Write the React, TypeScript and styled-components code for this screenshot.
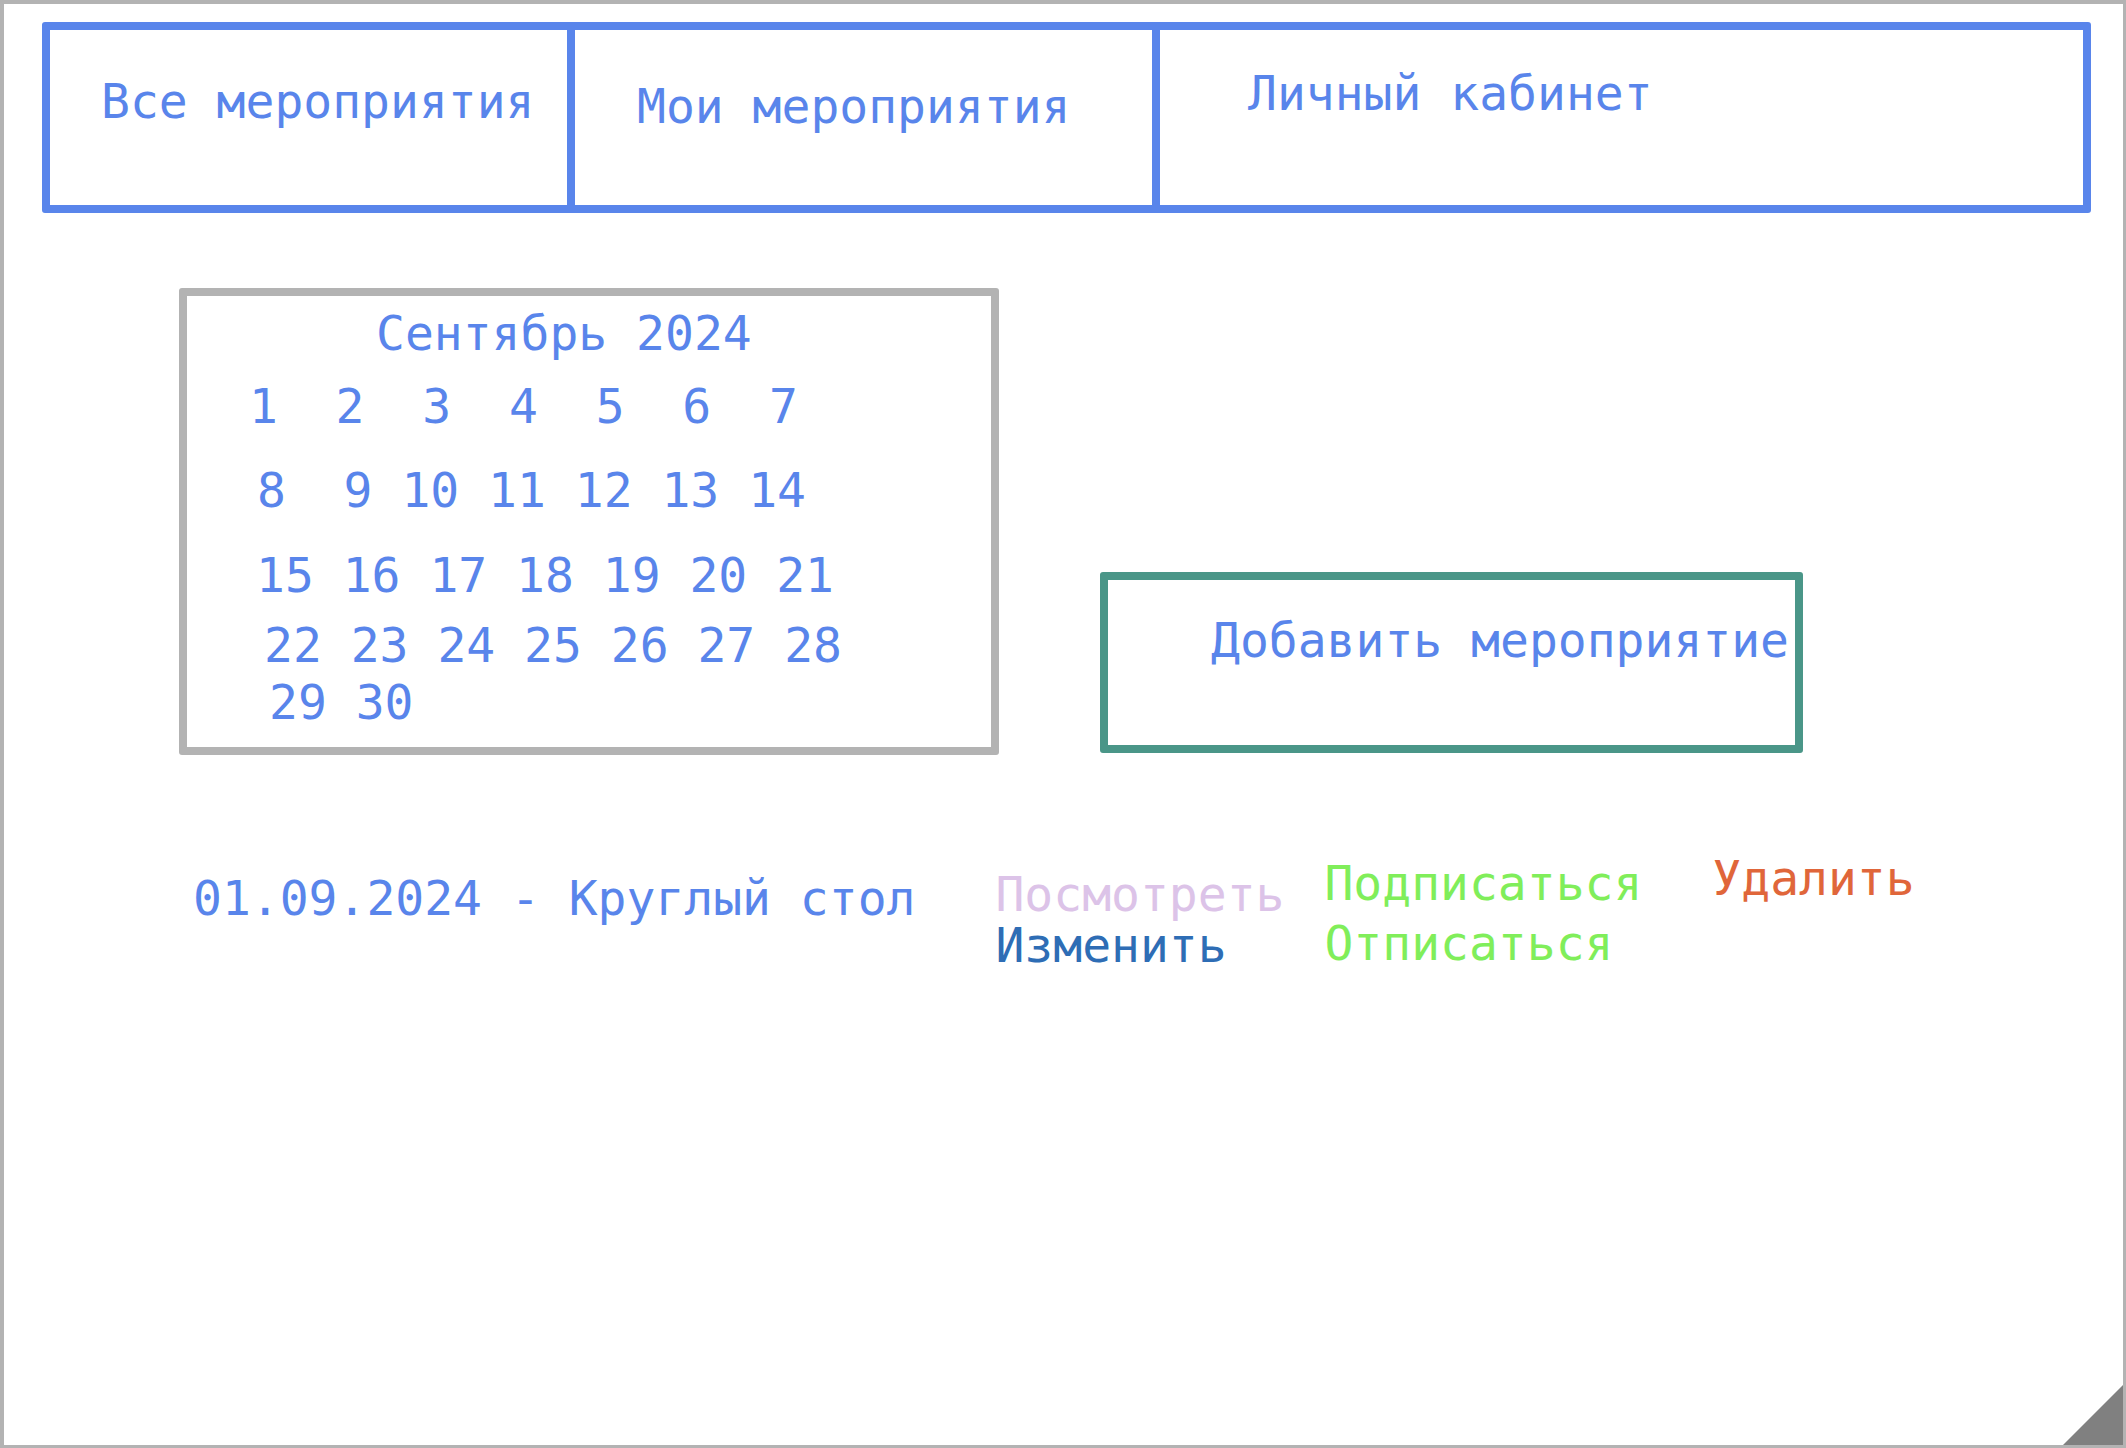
import React from "react";
import styled, { createGlobalStyle } from "styled-components";

// Wireframe of the events page: tabs on top, the month calendar,
// the add button and one event row with its actions.

const colors = {
    text: "#5985eb",
    frame: "#b3b3b3",
    teal: "#4a9688",
    view: "#dcc3e8",
    edit: "#2e6db5",
    subscribe: "#80ee5a",
    remove: "#e0663a",
    grip: "#808080",
};

const GlobalStyle = createGlobalStyle`
    html, body {
        margin: 0;
        padding: 0;
        background: #fff;
    }
    body {
        font-family: "DejaVu Sans Mono", "Liberation Mono", monospace;
    }
`;

const Page = styled.div`
    position: relative;
    box-sizing: border-box;
    width: 2126px;
    height: 1448px;
    padding-top: 18px;
    border-style: solid;
    border-color: ${colors.frame};
    border-width: 4px 3px 3px 4px;
    background: #fff;
    color: ${colors.text};
    font-size: 48px;
    line-height: 1;
    white-space: nowrap;
    overflow: hidden;
`;

// Top navigation
const Nav = styled.nav`
    box-sizing: border-box;
    display: flex;
    width: 2049px;
    height: 191px;
    margin-left: 38px;
    border: 8px solid ${colors.text};
    border-radius: 3px;
`;

const Tab = styled.a<{ $width?: number; $top: number; $left: number; $first?: boolean }>`
    box-sizing: border-box;
    display: block;
    ${({ $width }) => ($width ? `width: ${$width}px; flex: none;` : "flex: 1;")}
    padding: ${({ $top, $left }) => `${$top}px 0 0 ${$left}px`};
    border-left: ${({ $first }) => ($first ? "none" : `8px solid ${colors.text}`)};
    color: inherit;
    text-decoration: none;
    cursor: pointer;
`;

// Calendar + add button
const MainRow = styled.section`
    display: flex;
    align-items: flex-start;
    margin-top: 75px;
    padding-left: 175px;
`;

const Calendar = styled.div`
    box-sizing: border-box;
    width: 820px;
    height: 467px;
    padding-top: 13px;
    border: 8px solid ${colors.frame};
    border-radius: 3px;
`;

const MonthTitle = styled.div`
    padding-left: 189px;
`;

const DayRow = styled.div<{ $gap: number; $indent: number }>`
    display: grid;
    grid-template-columns: repeat(7, 2ch);
    column-gap: 1ch;
    justify-items: end;
    margin-top: ${({ $gap }) => $gap}px;
    padding-left: ${({ $indent }) => $indent}px;
`;

const AddButton = styled.button`
    box-sizing: border-box;
    display: flex;
    align-items: flex-start;
    justify-content: flex-start;
    width: 703px;
    height: 181px;
    margin: 284px 0 0 101px;
    padding: 36px 0 0 103px;
    border: 8px solid ${colors.teal};
    border-radius: 3px;
    background: #fff;
    color: ${colors.text};
    font: inherit;
    cursor: pointer;
`;

// Event list
const EventRow = styled.section`
    display: flex;
    align-items: flex-start;
    margin-top: 99px;
    padding-left: 189px;
`;

const EventTitle = styled.div`
    margin-top: 20px;
`;

const ActionColumn = styled.div<{ $left: number; $top: number; $gap?: number }>`
    display: flex;
    flex-direction: column;
    align-items: flex-start;
    gap: ${({ $gap }) => $gap ?? 0}px;
    margin-left: ${({ $left }) => $left}px;
    margin-top: ${({ $top }) => $top}px;
`;

const Action = styled.a<{ $color: string }>`
    color: ${({ $color }) => $color};
    text-decoration: none;
    cursor: pointer;
`;

const Grip = styled.svg`
    position: absolute;
    right: 0;
    bottom: 0;
    width: 60px;
    height: 60px;
`;

const weeks = [
    { days: [1, 2, 3, 4, 5, 6, 7], gap: 25, indent: 33 },
    { days: [8, 9, 10, 11, 12, 13, 14], gap: 36, indent: 41 },
    { days: [15, 16, 17, 18, 19, 20, 21], gap: 37, indent: 69 },
    { days: [22, 23, 24, 25, 26, 27, 28], gap: 22, indent: 77 },
    { days: [29, 30], gap: 9, indent: 82 },
];

export default function App() {
    return (
        <>
            <GlobalStyle />
            <Page>
                <Nav>
                    <Tab $first $width={517} $top={47} $left={51}>
                        Все мероприятия
                    </Tab>
                    <Tab $width={585} $top={52} $left={62}>
                        Мои мероприятия
                    </Tab>
                    <Tab $top={39} $left={88}>
                        Личный кабинет
                    </Tab>
                </Nav>

                <MainRow>
                    <Calendar>
                        <MonthTitle>Сентябрь 2024</MonthTitle>
                        {weeks.map((week) => (
                            <DayRow key={week.days[0]} $gap={week.gap} $indent={week.indent}>
                                {week.days.map((day) => (
                                    <span key={day}>{day}</span>
                                ))}
                            </DayRow>
                        ))}
                    </Calendar>
                    <AddButton type="button">Добавить мероприятие</AddButton>
                </MainRow>

                <EventRow>
                    <EventTitle>01.09.2024 - Круглый стол</EventTitle>
                    <ActionColumn $left={80} $top={16} $gap={3}>
                        <Action $color={colors.view}>Посмотреть</Action>
                        <Action $color={colors.edit}>Изменить</Action>
                    </ActionColumn>
                    <ActionColumn $left={40} $top={5} $gap={12}>
                        <Action $color={colors.subscribe}>Подписаться</Action>
                        <Action $color={colors.subscribe}>Отписаться</Action>
                    </ActionColumn>
                    <ActionColumn $left={70} $top={0}>
                        <Action $color={colors.remove}>Удалить</Action>
                    </ActionColumn>
                </EventRow>

                <Grip viewBox="0 0 60 60">
                    <polygon points="60,0 60,60 0,60" fill={colors.grip} />
                </Grip>
            </Page>
        </>
    );
}
